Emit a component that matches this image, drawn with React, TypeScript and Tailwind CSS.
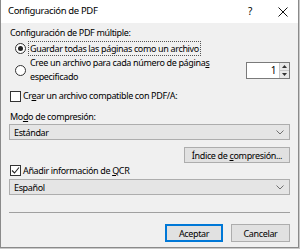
import React from "react";

const font = { fontFamily: '"Noto Sans", "Open Sans", sans-serif' };

function Chevron() {
  return (
    <svg width="8" height="5" viewBox="0 0 8 5" className="shrink-0">
      <path d="M0.5 0.5 L4 4 L7.5 0.5" fill="none" stroke="#707070" strokeWidth="1" />
    </svg>
  );
}

function Select({ value }: { value: string }) {
  return (
    <div className="flex h-[16px] items-center justify-between border border-[#adadad] bg-[#e5e5e5] pl-[4px] pr-[5px]">
      <span className="leading-none">{value}</span>
      <Chevron />
    </div>
  );
}

function Checkbox({ checked }: { checked?: boolean }) {
  return (
    <span className="flex h-[11px] w-[11px] shrink-0 items-center justify-center border border-[#333333] bg-white">
      {checked && (
        <svg width="9" height="9" viewBox="0 0 9 9">
          <path d="M1 4.5 L3.5 7 L8 1.5" fill="none" stroke="#222" strokeWidth="1.1" />
        </svg>
      )}
    </span>
  );
}

function Radio({ checked }: { checked?: boolean }) {
  return (
    <span className="flex h-[11px] w-[11px] shrink-0 items-center justify-center rounded-full border border-[#333333] bg-white">
      {checked && <span className="h-[5px] w-[5px] rounded-full bg-[#222]" />}
    </span>
  );
}

export default function App() {
  return (
    <div
      className="h-[249px] w-[300px] bg-[#c9c9c9] text-[9px] tracking-[-0.35px] text-black"
      style={font}
    >
      <div className="flex h-[248px] w-[299px] flex-col border-x border-b border-[#8a8a8a]">
        {/* title bar */}
        <div className="flex h-[23px] shrink-0 items-center bg-white pl-[7px] pr-[10px]">
          <span className="flex-1 text-[9.5px]">Configuración de PDF</span>
          <span className="mr-[26px] text-[10px]">?</span>
          <svg width="10" height="10" viewBox="0 0 10 10">
            <path d="M0.5 0.5 L9.5 9.5 M9.5 0.5 L0.5 9.5" stroke="#111" strokeWidth="1" />
          </svg>
        </div>

        <div className="flex flex-1 flex-col bg-[#f0f0f0] px-[8px]">
          <div className="mt-[3px] h-[14px] pl-[1px] leading-[14px]">Configuración de PDF múltiple:</div>

          <div className="flex h-[16px] items-center pl-[6px]">
            <Radio checked />
            <span className="ml-[2px] border border-dotted border-[#555] px-[1px] leading-[13px]">
              Guardar todas las páginas como un archivo
            </span>
          </div>

          <div className="flex items-center pl-[6px]">
            <Radio />
            <div className="ml-[4px] flex-1 leading-[14px]">
              <div>
                Cree un archivo para cada número de página<span className="underline">s</span>
              </div>
              <div>especificado</div>
            </div>
            <div className="flex h-[17px] w-[44px] border border-[#7a7a7a] bg-white">
              <div className="flex flex-1 items-center justify-end pr-[3px] text-[10px]">1</div>
              <div className="flex w-[10px] flex-col border-l border-[#c8c8c8] bg-[#e9e9e9]">
                <div className="flex flex-1 items-center justify-center border-b border-[#c8c8c8]">
                  <svg width="5" height="3" viewBox="0 0 5 3">
                    <path d="M0 3 L2.5 0 L5 3 Z" fill="#333" />
                  </svg>
                </div>
                <div className="flex flex-1 items-center justify-center">
                  <svg width="5" height="3" viewBox="0 0 5 3">
                    <path d="M0 0 L2.5 3 L5 0 Z" fill="#333" />
                  </svg>
                </div>
              </div>
            </div>
          </div>

          <div className="mt-[4px] flex h-[16px] items-center pl-[1px]">
            <Checkbox />
            <span className="ml-[2px]">
              Cr<span className="underline">e</span>ar un archivo compatible con PDF/A:
            </span>
          </div>

          <div className="mt-[6px] h-[14px] pl-[1px] leading-[14px]">
            Mo<span className="underline">d</span>o de compresión:
          </div>
          <Select value="Estándar" />

          <div className="mt-[7px] flex justify-end">
            <button className="flex h-[16px] w-[106px] items-center justify-center whitespace-nowrap border border-[#adadad] bg-[#e1e1e1] leading-none">
              Índice de&nbsp;<span className="underline">c</span>ompresión...
            </button>
          </div>

          <div className="flex h-[15px] items-center pl-[1px]">
            <Checkbox checked />
            <span className="ml-[2px]">
              Añadir información de <span className="underline">Q</span>CR
            </span>
          </div>
          <div className="mt-[1px]">
            <Select value="Español" />
          </div>

          <div className="mt-[17px] h-px bg-[#a0a0a0]" />

          <div className="mt-[11px] flex justify-end gap-[8px]">
            <button className="flex h-[18px] w-[58px] items-center justify-center border-2 border-[#0078d7] bg-[#e1e1e1] leading-none">
              Aceptar
            </button>
            <button className="flex h-[18px] w-[59px] items-center justify-center border border-[#adadad] bg-[#e1e1e1] leading-none">
              Cancelar
            </button>
          </div>
        </div>
      </div>
    </div>
  );
}
